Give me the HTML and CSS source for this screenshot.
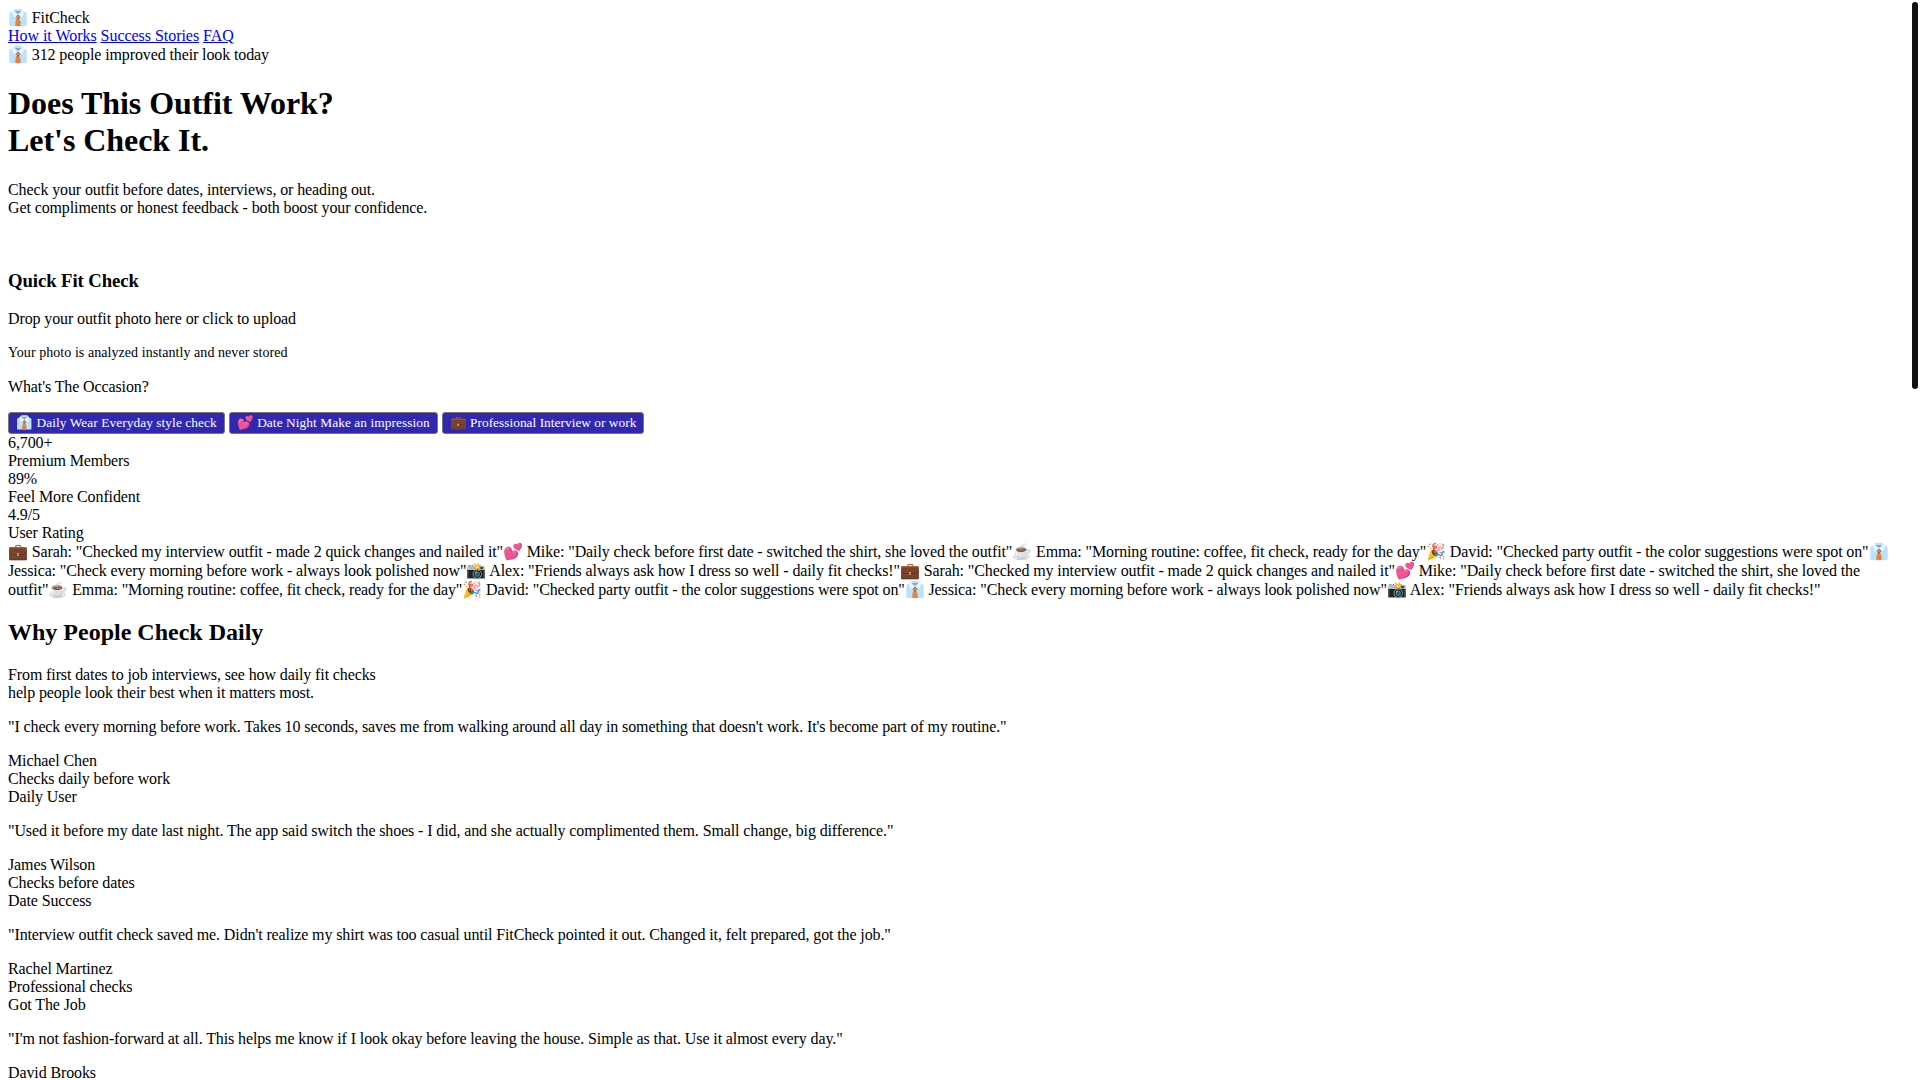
FILE: index.html
```html
<!DOCTYPE html>
<html lang="en">
<head>
<meta charset="utf-8">
<title>FitCheck</title>
<link rel="stylesheet" href="styles.css">
</head>
<body>
<header>
<div>👔 FitCheck</div>
<nav class="links"><a href="#how">How it Works</a> <a href="#stories">Success Stories</a> <a href="#faq">FAQ</a></nav>
</header>
<main class="page">
<section class="hero">
<div>👔 312 people improved their look today</div>
<h1>Does This Outfit Work?<br>Let's Check It.</h1>
<p>Check your outfit before dates, interviews, or heading out.<br>Get compliments or honest feedback - both boost your confidence.</p>
</section>
<section class="check">
<h3>Quick Fit Check</h3>
<p>Drop your outfit photo here or click to upload</p>
<p class="small">Your photo is analyzed instantly and never stored</p>
<h4 class="occasion">What's The Occasion?</h4>
<div class="occasions">
<button class="occ">👔 Daily Wear Everyday style check</button>
<button class="occ">💕 Date Night Make an impression</button>
<button class="occ occ-pro">💼 Professional Interview or work</button>
</div>
</section>
<section class="stats">
<div>6,700+</div><div>Premium Members</div>
<div>89%</div><div>Feel More Confident</div>
<div>4.9/5</div><div>User Rating</div>
</section>
<section class="ticker">💼 Sarah: "Checked my interview outfit - made 2 quick changes and nailed it"💕 Mike: "Daily check before first date - switched the shirt, she loved the outfit"☕ Emma: "Morning routine: coffee, fit check, ready for the day"🎉 David: "Checked party outfit - the color suggestions were spot on"👔 Jessica: "Check every morning before work - always look polished now"📸 Alex: "Friends always ask how I dress so well - daily fit checks!"💼 Sarah: "Checked my interview outfit - made 2 quick changes and nailed it"💕 Mike: "Daily check before first date - switched the shirt, she loved the outfit"☕ Emma: "Morning routine: coffee, fit check, ready for the day"🎉 David: "Checked party outfit - the color suggestions were spot on"👔 Jessica: "Check every morning before work - always look polished now"📸 Alex: "Friends always ask how I dress so well - daily fit checks!"</section>
<section class="why">
<h2>Why People Check Daily</h2>
<p>From first dates to job interviews, see how daily fit checks<br>help people look their best when it matters most.</p>
<p>"I check every morning before work. Takes 10 seconds, saves me from walking around all day in something that doesn't work. It's become part of my routine."</p>
<p>Michael Chen<br>Checks daily before work<br>Daily User</p>
<p>"Used it before my date last night. The app said switch the shoes - I did, and she actually complimented them. Small change, big difference."</p>
<p>James Wilson<br>Checks before dates<br>Date Success</p>
<p>"Interview outfit check saved me. Didn't realize my shirt was too casual until FitCheck pointed it out. Changed it, felt prepared, got the job."</p>
<p>Rachel Martinez<br>Professional checks<br>Got The Job</p>
<p>"I'm not fashion-forward at all. This helps me know if I look okay before leaving the house. Simple as that. Use it almost every day."</p>
<p>David Brooks</p>
</section>
</main>
<div class="scroll-thumb"></div>
</body>
</html>
```
FILE: styles.css
```css
body { margin: 8px; font-family: "Liberation Serif", serif; color: #000; font-size: 16px; letter-spacing: -0.115px; background: #fff; }
.page { min-height: 2900px; }
.links { letter-spacing: -0.04px; }
h1 { letter-spacing: -0.05px; }
h2 { letter-spacing: 0; margin-bottom: 20px; }
h3 { letter-spacing: -0.08px; line-height: 21px; }
.hero { margin-bottom: 53px; }
.small { font-size: 14px; letter-spacing: 0.06px; margin: 17px 0; }
.occasion { font-weight: normal; font-size: 16px; margin: 17px 0 16px; }
.occ { background: #3128b0; color: #fff; font-family: inherit; font-size: 13.33px; letter-spacing: 0.08px; padding: 2px 7px; border: 1px solid #777; border-radius: 3px; }
.occ-pro { letter-spacing: 0.03px; }
.scroll-thumb { position: fixed; top: 2px; right: 2px; width: 6px; height: 387px; background: #111; border-radius: 3px; }
```
